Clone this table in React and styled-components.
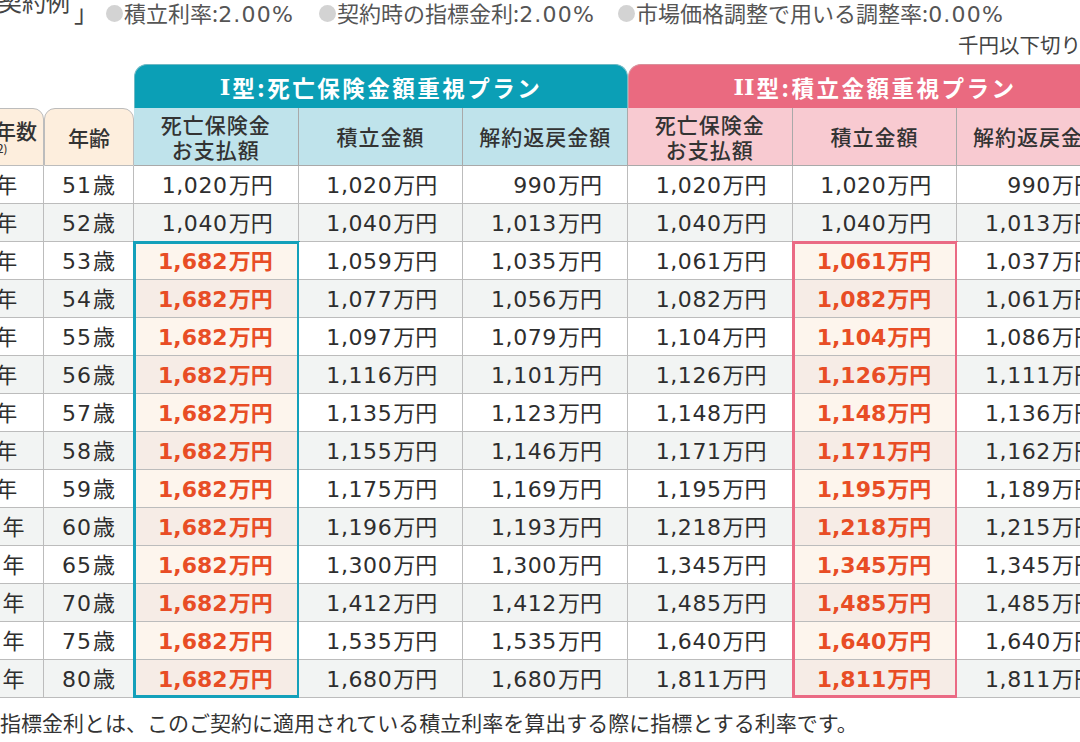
import styled, { createGlobalStyle } from "styled-components";

const teal = "#0b9fb6";
const pink = "#ea6a80";
const line = "#bcbcbc";

const GlobalStyle = createGlobalStyle`
  html, body {
    margin: 0;
    padding: 0;
    background: #fff;
  }
  body {
    font-family: "Noto Sans CJK JP", "Noto Sans", sans-serif;
    color: #333;
    overflow: hidden;
  }
`;

const Page = styled.div`
  width: 1080px;
  height: 742px;
  overflow: hidden;
  background: #fff;
`;

const TopLine = styled.div`
  display: flex;
  align-items: flex-start;
  height: 24px;
  white-space: nowrap;
  color: #555;
`;

const Title = styled.span`
  font-size: 24px;
  line-height: 24px;
  margin: -11px 0 0 -2px;
  color: #444;
`;

const Bracket = styled.span`
  font-size: 24px;
  line-height: 24px;
  margin: 0 0 0 4px;
  width: 32px;
  color: #444;
`;

const Cond = styled.span`
  display: flex;
  align-items: center;
  font-size: 22px;
  line-height: 24px;
  margin-right: ${(p) => p.$gap}px;
`;

const Dot = styled.span`
  width: 17px;
  height: 17px;
  border-radius: 50%;
  background: #d3d3d3;
  margin-right: 1px;
`;

const Digits = styled.span`
  font-family: "DejaVu Sans", "Noto Sans", sans-serif;
  letter-spacing: ${(p) => p.$ls ?? 0.4}px;
  margin-right: 1px;
`;

const Roman = styled.span`
  font-family: "DejaVu Serif", "Liberation Serif", serif;
  letter-spacing: 0;
  margin-right: 2px;
`;

const Sheet = styled.div`
  width: 1168px;
  margin-left: -46px;
`;

const Note = styled.div`
  display: flex;
  justify-content: flex-end;
  height: 40px;
  line-height: 40px;
  font-size: 20.5px;
  color: #444;
`;

const Table = styled.div`
  display: grid;
  grid-template-columns: 90px 90px repeat(6, 164.67px);
`;

const Spacer = styled.div`
  grid-column: span 2;
`;

const Banner = styled.div`
  grid-column: span 3;
  height: 44px;
  box-sizing: border-box;
  border: 1px solid ${(p) => (p.$tone === "teal" ? "#6fb9c4" : "#d9909b")};
  border-bottom: none;
  border-radius: 13px 13px 0 0;
  background: ${(p) => (p.$tone === "teal" ? teal : pink)};
  color: #fff;
  display: flex;
  align-items: center;
  justify-content: center;
  font-size: 22.5px;
  font-weight: 700;
  letter-spacing: 2.5px;
`;

const LeftHead = styled.div`
  height: 58px;
  box-sizing: border-box;
  border: 1px solid ${line};
  border-radius: 11px 11px 0 0;
  background: #fdeedd;
  display: flex;
  flex-direction: column;
  align-items: center;
  justify-content: center;
  padding-right: ${(p) => p.$pr ?? 0}px;
  font-size: 21px;
  font-weight: 500;
  line-height: 22px;
  white-space: nowrap;
`;

const Small = styled.span`
  font-size: 11px;
  line-height: 14px;
`;

const SubHead = styled.div`
  height: 58px;
  box-sizing: border-box;
  border-right: 1px solid #a9a9a9;
  border-bottom: 1px solid #a9a9a9;
  background: ${(p) => (p.$tone === "teal" ? "#bfe3eb" : "#f8cad1")};
  display: flex;
  align-items: center;
  justify-content: center;
  text-align: center;
  font-size: 21px;
  font-weight: 500;
  line-height: 25px;
  letter-spacing: 1px;
`;

const Cell = styled.div`
  position: relative;
  height: 38px;
  box-sizing: border-box;
  border-right: 1px solid ${line};
  border-bottom: 1px solid ${line};
  background: ${(p) =>
    p.$hl
      ? p.$even
        ? "#f6ece6"
        : "#fdf5ed"
      : p.$even
      ? "#f2f4f3"
      : "#fff"};
  display: flex;
  align-items: center;
  justify-content: ${(p) => (p.$center ? "center" : "flex-end")};
  padding-right: ${(p) => (p.$center ? 0 : 25)}px;
  font-size: 22px;
  font-weight: ${(p) => (p.$hl ? 700 : 400)};
  color: ${(p) => (p.$hl ? "#e84d25" : "#2e2e2e")};
  white-space: nowrap;

  &::after {
    content: "";
    display: ${(p) => (p.$hl ? "block" : "none")};
    position: absolute;
    top: ${(p) => (p.$first ? -1 : 0)}px;
    bottom: -1px;
    left: -1px;
    right: -2px;
    border: 3px solid ${(p) => (p.$hl === "teal" ? "#14a0ba" : "#ea6a84")};
    border-top-width: ${(p) => (p.$first ? 3 : 0)}px;
    border-bottom-width: ${(p) => (p.$last ? 3 : 0)}px;
    pointer-events: none;
  }
`;

const Value = styled.span`
  line-height: 26px;
`;

const Footer = styled.div`
  margin-top: 12px;
  font-size: 21px;
  line-height: 24px;
  color: #333;
  white-space: nowrap;
`;

const rows = [
  [1, 51, 1020, 1020, 990, 1020, 1020, 990],
  [2, 52, 1040, 1040, 1013, 1040, 1040, 1013],
  [3, 53, 1682, 1059, 1035, 1061, 1061, 1037],
  [4, 54, 1682, 1077, 1056, 1082, 1082, 1061],
  [5, 55, 1682, 1097, 1079, 1104, 1104, 1086],
  [6, 56, 1682, 1116, 1101, 1126, 1126, 1111],
  [7, 57, 1682, 1135, 1123, 1148, 1148, 1136],
  [8, 58, 1682, 1155, 1146, 1171, 1171, 1162],
  [9, 59, 1682, 1175, 1169, 1195, 1195, 1189],
  [10, 60, 1682, 1196, 1193, 1218, 1218, 1215],
  [15, 65, 1682, 1300, 1300, 1345, 1345, 1345],
  [20, 70, 1682, 1412, 1412, 1485, 1485, 1485],
  [25, 75, 1682, 1535, 1535, 1640, 1640, 1640],
  [30, 80, 1682, 1680, 1680, 1811, 1811, 1811],
];

const subHeads = [
  ["teal", ["死亡保険金", "お支払額"]],
  ["teal", ["積立金額"]],
  ["teal", ["解約返戻金額"]],
  ["pink", ["死亡保険金", "お支払額"]],
  ["pink", ["積立金額"]],
  ["pink", ["解約返戻金額"]],
];

const conditions = [
  ["積立利率:", "2.00%", 24],
  ["契約時の指標金利:", "2.00%", 22],
  ["市場価格調整で用いる調整率:", "0.00%", 0],
];

const fmt = (n) => n.toLocaleString("en-US");

export default function App() {
  return (
    <Page>
      <GlobalStyle />
      <TopLine>
        <Title>契約例</Title>
        <Bracket>」</Bracket>
        {conditions.map(([label, rate, gap]) => (
          <Cond key={label} $gap={gap}>
            <Dot />
            <span>
              {label}
              <Digits $ls={1.2}>{rate}</Digits>
            </span>
          </Cond>
        ))}
      </TopLine>
      <Sheet>
        <Note>千円以下切り捨て</Note>
        <Table>
          <Spacer />
          <Banner $tone="teal">
            <Roman>I</Roman>型:死亡保険金額重視プラン
          </Banner>
          <Banner $tone="pink">
            <Roman>II</Roman>型:積立金額重視プラン
          </Banner>

          <LeftHead $pr={8}>
            経過年数
            <Small>(※2)</Small>
          </LeftHead>
          <LeftHead>年齢</LeftHead>
          {subHeads.map(([tone, lines], i) => (
            <SubHead key={i} $tone={tone}>
              <div>
                {lines.map((l) => (
                  <div key={l}>{l}</div>
                ))}
              </div>
            </SubHead>
          ))}

          {rows.map((r, i) => {
            const even = i % 2 === 1;
            const hl = i >= 2;
            return [
              <Cell key={`y${i}`} $center $even={even}>
                <Value>
                  <Digits>{r[0]}</Digits>年
                </Value>
              </Cell>,
              <Cell key={`a${i}`} $center $even={even}>
                <Value>
                  <Digits $ls={1}>{r[1]}</Digits>歳
                </Value>
              </Cell>,
              ...r.slice(2).map((v, j) => {
                const tone = hl && j === 0 ? "teal" : hl && j === 4 ? "pink" : null;
                return (
                  <Cell
                    key={`c${i}-${j}`}
                    $even={even}
                    $hl={tone}
                    $first={i === 2}
                    $last={i === rows.length - 1}
                  >
                    <Value>
                      <Digits $ls={tone ? 0 : 0.6}>{fmt(v)}</Digits>万円
                    </Value>
                  </Cell>
                );
              }),
            ];
          })}
        </Table>
      </Sheet>
      <Footer>指標金利とは、このご契約に適用されている積立利率を算出する際に指標とする利率です。</Footer>
    </Page>
  );
}
